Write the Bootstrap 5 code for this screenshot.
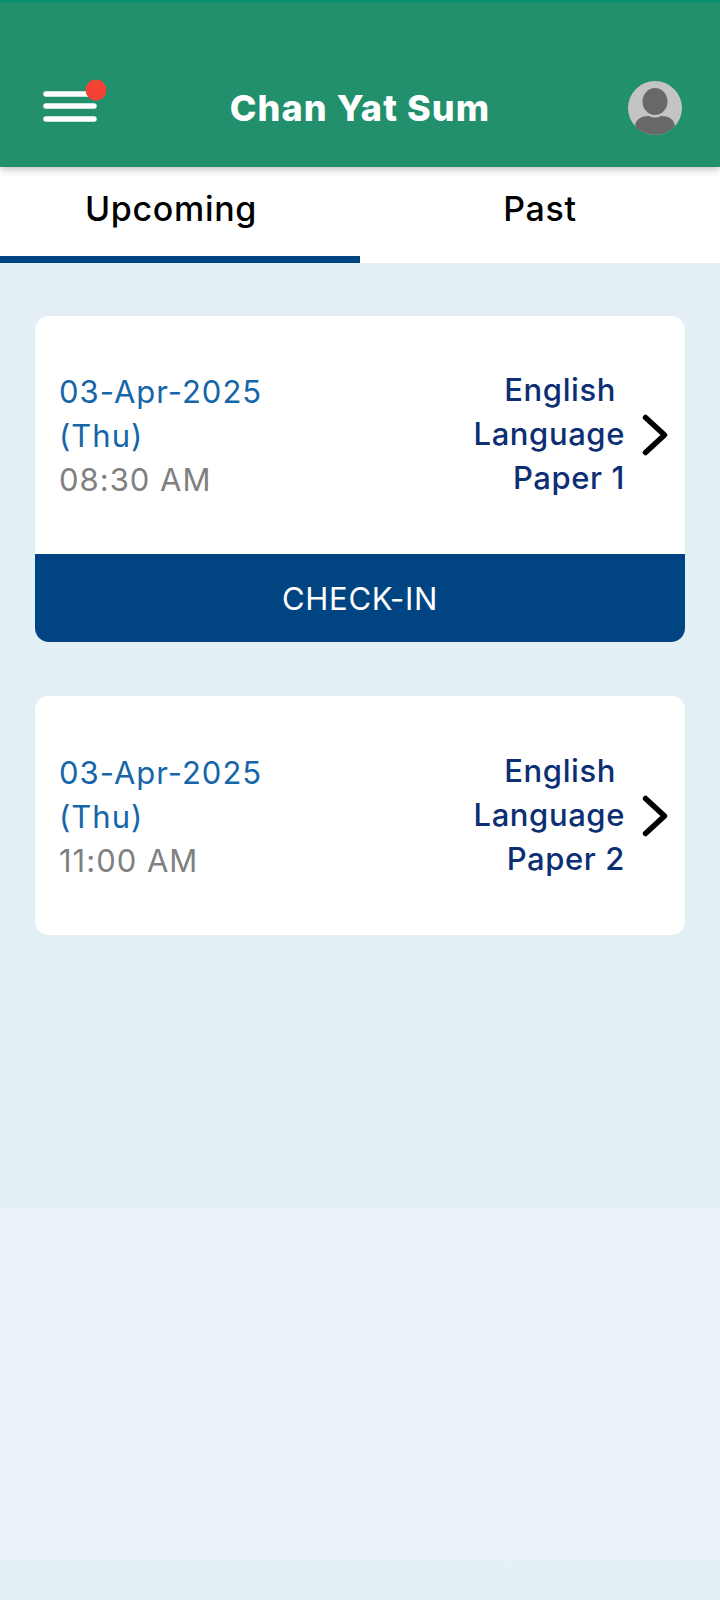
<!DOCTYPE html>
<html lang="en">
<head>
    <meta charset="UTF-8">
    <meta name="viewport" content="width=device-width, initial-scale=1.0">
    <title>Exam Schedule</title>
    <link href="https://cdn.jsdelivr.net/npm/bootstrap@5.3.0/dist/css/bootstrap.min.css" rel="stylesheet">
    <style>
        body {
            font-family: Inter, "Noto Sans", sans-serif;
            background: linear-gradient(#e4eff5 0, #e4eff5 1205px, #e9f1f9 1209px, #e9f1f9 1559px, #e5f0f6 1563px);
            min-height: 1600px;
        }
        .app-header {
            background-color: #228f6d;
            border-top: 3px solid #0b8f6e;
            padding: 78px 38px 32px;
            box-shadow: 0 3px 7px rgba(0,0,0,0.22);
            z-index: 2;
        }
        .header-side { width: 70px; }
        .header-side svg { overflow: visible; }
        .app-title {
            font-weight: 800;
            font-size: 36px;
            letter-spacing: 1.1px;
            line-height: 54px;
            color: #fff;
        }
        .exam-tabs { height: 96px; background: #fff; }
        .exam-tab {
            color: #000;
            font-size: 34px;
            font-weight: 450;
            letter-spacing: 0.7px;
            line-height: 1;
            padding-top: 25px;
            border-bottom: 7px solid transparent;
            border-radius: 0;
        }
        .exam-tab:hover { color: #000; }
        .exam-tab.active { border-bottom-color: #004481; padding-right: 34px; }
        .page-body { padding: 53px 35px 0; }
        .exam-card {
            border: 0;
            border-radius: 14px;
            margin-bottom: 54px;
            overflow: hidden;
        }
        .exam-info { height: 238px; padding: 0 17px 0 24px; }
        .exam-info.no-action { height: 239px; }
        .exam-lines { font-size: 31px; line-height: 44px; }
        .exam-when { letter-spacing: 1px; padding-top: 2px; }
        .exam-date { color: #1565a9; }
        .exam-time { color: #808080; }
        .exam-subject {
            color: #0c2f74;
            font-weight: 450;
            text-align: right;
            letter-spacing: 0.6px;
            margin: -2px 17px 0 0;
        }
        .exam-subject .first-line { padding-right: 9px; }
        .exam-chevron { stroke: #000; stroke-width: 5.5; fill: none; stroke-linecap: round; stroke-linejoin: round; }
        .checkin-btn {
            background: #004481;
            color: #fff;
            height: 88px;
            padding-top: 8px;
            font-size: 31px;
            letter-spacing: 0.7px;
            border: 0;
            border-radius: 0;
        }
    </style>
</head>
<body>
    <header class="app-header position-relative d-flex align-items-center justify-content-between">
        <div class="header-side">
            <svg width="70" height="54" viewBox="0 0 70 54">
                <g stroke="#fff" stroke-width="5.5" stroke-linecap="round">
                    <line x1="8" y1="13" x2="56" y2="13"/>
                    <line x1="8" y1="25" x2="56" y2="25"/>
                    <line x1="8" y1="38" x2="56" y2="38"/>
                </g>
                <circle cx="58" cy="9" r="10.5" fill="#f44336"/>
            </svg>
        </div>
        <div class="app-title">Chan Yat Sum</div>
        <div class="header-side d-flex justify-content-end">
            <svg width="54" height="54" viewBox="0 0 54 54">
                <defs><clipPath id="avatarClip"><circle cx="27" cy="27" r="27"/></clipPath></defs>
                <circle cx="27" cy="27" r="27" fill="#c4c4c4"/>
                <g clip-path="url(#avatarClip)" fill="#686868">
                    <ellipse cx="27" cy="20.5" rx="12.5" ry="13.5"/>
                    <path d="M7 54 V46 C7 38 14 35 21 35 Q27 38 33 35 C40 35 47 38 47 46 V54 Z"/>
                </g>
            </svg>
        </div>
    </header>

    <nav class="nav exam-tabs">
        <a class="nav-link exam-tab active col-6 text-center" href="#">Upcoming</a>
        <a class="nav-link exam-tab col-6 text-center" href="#">Past</a>
    </nav>

    <main class="page-body">
        <div class="card exam-card">
            <div class="exam-info d-flex align-items-center justify-content-between">
                <div class="exam-lines exam-when">
                    <div class="exam-date">03-Apr-2025</div>
                    <div class="exam-date">(Thu)</div>
                    <div class="exam-time">08:30 AM</div>
                </div>
                <div class="d-flex align-items-center">
                    <div class="exam-lines exam-subject">
                        <div class="first-line">English</div>
                        <div>Language</div>
                        <div>Paper 1</div>
                    </div>
                    <svg width="26" height="42" viewBox="0 0 26 42"><path class="exam-chevron" d="M3.5 3.5 L22.5 21 L3.5 38.5"/></svg>
                </div>
            </div>
            <button type="button" class="btn checkin-btn w-100">CHECK-IN</button>
        </div>

        <div class="card exam-card">
            <div class="exam-info no-action d-flex align-items-center justify-content-between">
                <div class="exam-lines exam-when">
                    <div class="exam-date">03-Apr-2025</div>
                    <div class="exam-date">(Thu)</div>
                    <div class="exam-time">11:00 AM</div>
                </div>
                <div class="d-flex align-items-center">
                    <div class="exam-lines exam-subject">
                        <div class="first-line">English</div>
                        <div>Language</div>
                        <div>Paper 2</div>
                    </div>
                    <svg width="26" height="42" viewBox="0 0 26 42"><path class="exam-chevron" d="M3.5 3.5 L22.5 21 L3.5 38.5"/></svg>
                </div>
            </div>
        </div>
    </main>

    <script src="https://cdn.jsdelivr.net/npm/bootstrap@5.3.0/dist/js/bootstrap.bundle.min.js"></script>
</body>
</html>
